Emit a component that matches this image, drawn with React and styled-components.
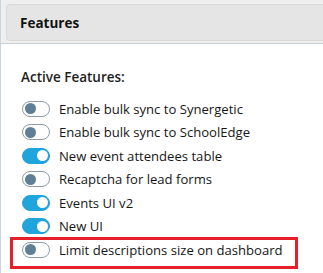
import React from 'react';
import styled, { createGlobalStyle } from 'styled-components';

const GlobalStyle = createGlobalStyle`
body {
  margin: 0;
  background: #ffffff;
  font-family: "Open Sans", "Noto Sans", sans-serif;
  color: #222222;
}
`;

const Panel = styled.div`
height: 273px;
border-left: 1px solid #c9d4dd;
box-sizing: border-box;
overflow: hidden;
`;

const HeaderArea = styled.div`
background: #efefef;
padding: 4px 0 2px 5px;
border-bottom: 1px solid #c4cfd8;
`;

const HeaderCard = styled.div`
height: 35px;
margin-right: -6px;
background: #e5e5e5;
border: 1px solid #d8d8d8;
border-radius: 4px;
display: flex;
align-items: center;
padding-left: 13px;
font-size: 13.5px;
font-weight: 700;
color: #111111;
`;

const Body = styled.div`
padding: 23px 0 0 20px;
`;

const SectionTitle = styled.div`
height: 20px;
line-height: 20px;
font-size: 13.5px;
font-weight: 600;
color: #1e1e1e;
margin-bottom: 10px;
`;

const Row = styled.label`
position: relative;
display: flex;
align-items: center;
gap: 9px;
height: 23.5px;
font-size: 13.1px;
color: #161616;
white-space: nowrap;

${p => p.highlighted && `
  &::after {
    content: '';
    position: absolute;
    left: -11px;
    top: -1px;
    width: 282px;
    height: 26px;
    border: 3px solid #e5202a;
  }
`}
`;

const Switch = styled.span`
position: relative;
flex: none;
width: 26px;
height: 14px;
margin-left: 1px;
border-radius: 8px;
border: 1px solid ${p => (p.on ? '#1fa4dc' : '#8e9ca8')};
background: ${p => (p.on ? '#1fa4dc' : '#ffffff')};

&::before {
  content: '';
  position: absolute;
  top: 1.5px;
  left: ${p => (p.on ? '13.5px' : '1.5px')};
  width: 11px;
  height: 11px;
  border-radius: 50%;
  background: ${p => (p.on ? '#ffffff' : '#5f7f94')};
}
`;

const features = [
  { label: 'Enable bulk sync to Synergetic', on: false },
  { label: 'Enable bulk sync to SchoolEdge', on: false },
  { label: 'New event attendees table', on: true },
  { label: 'Recaptcha for lead forms', on: false },
  { label: 'Events UI v2', on: true },
  { label: 'New UI', on: true },
  { label: 'Limit descriptions size on dashboard', on: false, highlighted: true },
];

export default function App() {
  return (
    <Panel>
      <GlobalStyle />
      <HeaderArea>
        <HeaderCard>Features</HeaderCard>
      </HeaderArea>
      <Body>
        <SectionTitle>Active Features:</SectionTitle>
        {features.map(f => (
          <Row key={f.label} highlighted={f.highlighted}>
            <Switch on={f.on} />
            {f.label}
          </Row>
        ))}
      </Body>
    </Panel>
  );
}
